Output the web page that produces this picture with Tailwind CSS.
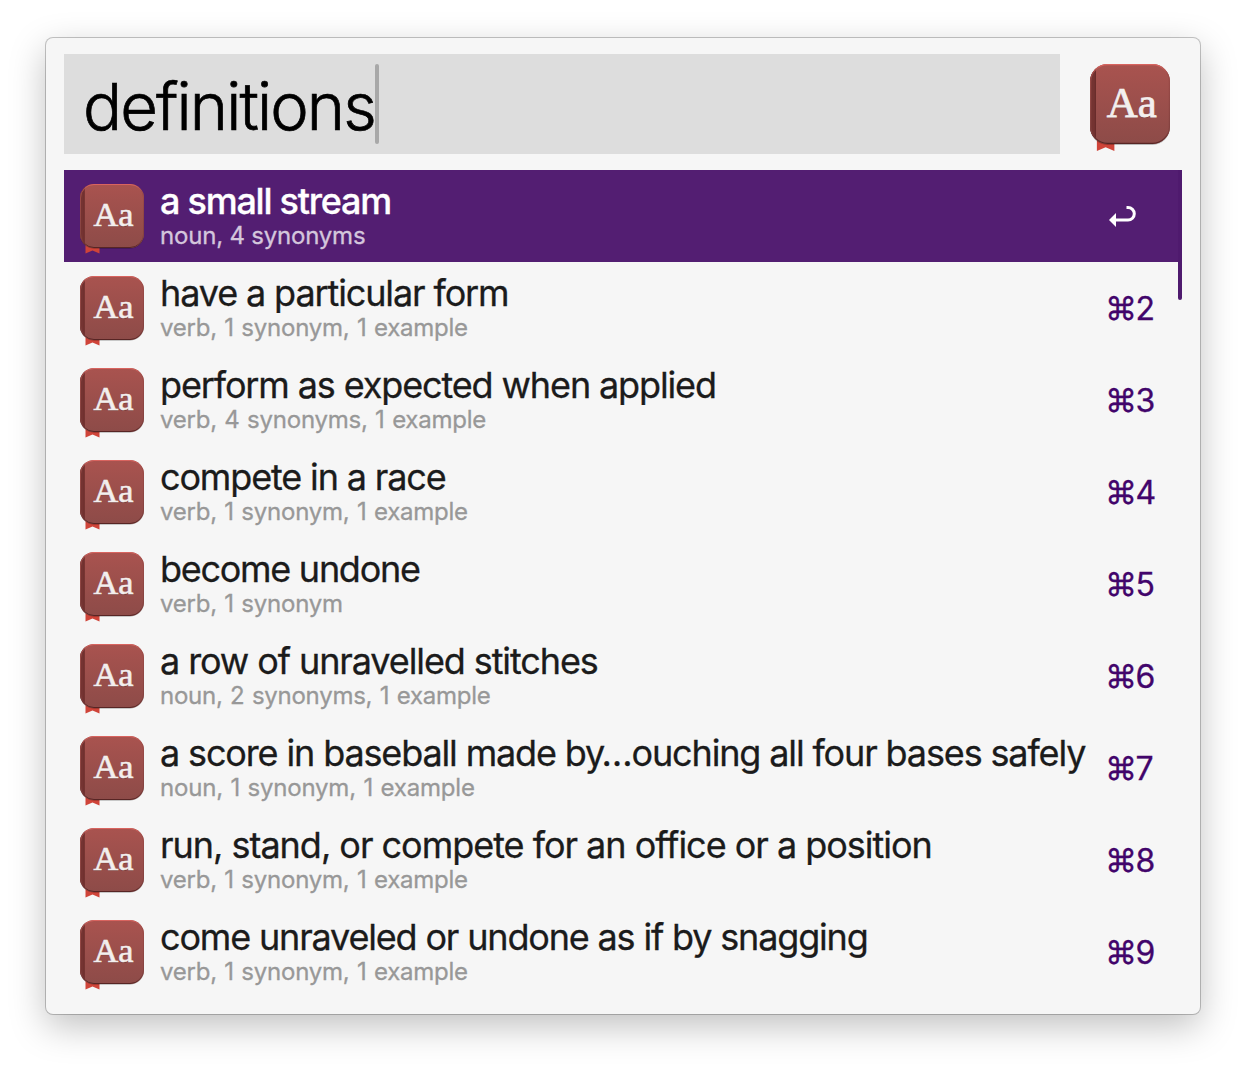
<!DOCTYPE html>
<html lang="en">
<head>
<meta charset="utf-8">
<title>definitions</title>
<script src="https://cdn.jsdelivr.net/npm/@tailwindcss/browser@4"></script>
</head>
<body class="bg-white w-[1246px] h-[1068px] overflow-hidden pt-[38px] pl-[46px] font-['Inter',sans-serif]">
<svg class="absolute w-0 h-0">
  <defs>
    <linearGradient id="cover" x1="0" y1="0" x2="0" y2="1"><stop offset="0" stop-color="#a9534f"/><stop offset="1" stop-color="#8d4b48"/></linearGradient>
    <linearGradient id="edge" x1="0" y1="0" x2="0" y2="1"><stop offset="0" stop-color="#d9645f"/><stop offset=".12" stop-color="#9c4b48"/><stop offset=".85" stop-color="#824240"/><stop offset="1" stop-color="#572524"/></linearGradient>
    <clipPath id="book"><rect width="64" height="64" rx="14"/></clipPath>
  </defs>
  <symbol id="dict" viewBox="0 0 64 70">
    <path d="M5.500 60H19.500V69.500L12.500 66.500L5.500 69.500Z" fill="#cf4439"/>
    <rect y=".7" width="64" height="64" rx="14" fill="#000" fill-opacity=".25"/>
    <g clip-path="url(#book)">
      <rect width="64" height="64" fill="url(#cover)"/>
      <rect width="4.200" height="64" fill="#743331"/>
      <path d="M4.300 0V64" stroke="#642a28" stroke-width=".8"/>
    </g>
    <rect x=".5" y=".5" width="63" height="63" rx="13.500" fill="none" stroke="url(#edge)"/>
    <text x="13.400" y="43" font-family="Liberation Serif, serif" font-size="33" textLength="40" lengthAdjust="spacingAndGlyphs" fill="#5d2a28" fill-opacity=".6">Aa</text>
    <text x="13.400" y="42.300" font-family="Liberation Serif, serif" font-size="33" textLength="40" lengthAdjust="spacingAndGlyphs" fill="#f3efee" stroke="#f3efee" stroke-width=".6">Aa</text>
  </symbol>
</svg>
<main class="relative w-[1154px] h-[976px] rounded-[7px] bg-[#f6f6f6] px-[18px] pt-4 shadow-[0_0_0_1px_rgba(0,0,0,0.22),0_12px_36px_rgba(0,0,0,0.25)]">
  <header class="flex">
    <div class="flex w-[996px] h-[100px] bg-[#dddddd] pl-[19px]">
      <span class="mt-[13px] text-[65px] leading-[80px] font-light tracking-[-1.900px] [-webkit-text-stroke:0.700px_black] text-black w-[292px] whitespace-nowrap">definitions</span>
      <span class="mt-[10px] w-1 h-20 rounded-full bg-[#a8a8a8]"></span>
    </div>
    <svg class="ml-[30px] mt-[10px] w-20 h-[87.500px]"><use href="#dict"/></svg>
  </header>
  <ul class="mt-4 [-webkit-text-stroke:0.300px_currentColor]">
    <li class="flex h-[92px] bg-[#531e72] pl-4">
      <svg class="mt-[14px] w-16 h-[70px] shrink-0"><use href="#dict"/></svg>
      <div class="ml-4 w-[946px] pt-[11px] whitespace-nowrap"><p class="text-[36px] leading-[40px] font-medium tracking-[-1.250px] text-white">a small stream</p><p class="mt-px text-[24px] leading-[28px] tracking-[-0.200px] text-[#d4c6dc]">noun, 4 synonyms</p></div>
      <svg class="mt-[34px] ml-[2px] w-[28px] h-[26px]" viewBox="0 0 28 26"><path d="M18.500 3.500H20a5.800 5.800 0 0 1 0 12.600H7" fill="none" stroke="#fff" stroke-width="3"/><path d="M1 16L8 9V23Z" fill="#fff"/></svg>
    </li>
    <li class="flex h-[92px] pl-4">
      <svg class="mt-[14px] w-16 h-[70px] shrink-0"><use href="#dict"/></svg>
      <div class="ml-4 w-[946px] pt-[11px] whitespace-nowrap"><p class="text-[36px] leading-[40px] tracking-[-1.120px] text-[#1b1b1b]">have a particular form</p><p class="mt-px text-[24px] leading-[28px] tracking-[-0.240px] [word-spacing:1px] text-[#989898]">verb, 1 synonym, 1 example</p></div>
      <span class="-ml-px mt-[27px] text-[32px] leading-[40px] tracking-[-1.500px] text-[#42056b] whitespace-nowrap">⌘2</span>
    </li>
    <li class="flex h-[92px] pl-4">
      <svg class="mt-[14px] w-16 h-[70px] shrink-0"><use href="#dict"/></svg>
      <div class="ml-4 w-[946px] pt-[11px] whitespace-nowrap"><p class="text-[36px] leading-[40px] tracking-[-1.130px] text-[#1b1b1b]">perform as expected when applied</p><p class="mt-px text-[24px] leading-[28px] tracking-[-0.240px] [word-spacing:1px] text-[#989898]">verb, 4 synonyms, 1 example</p></div>
      <span class="-ml-px mt-[27px] text-[32px] leading-[40px] tracking-[-1.500px] text-[#42056b] whitespace-nowrap">⌘3</span>
    </li>
    <li class="flex h-[92px] pl-4">
      <svg class="mt-[14px] w-16 h-[70px] shrink-0"><use href="#dict"/></svg>
      <div class="ml-4 w-[946px] pt-[11px] whitespace-nowrap"><p class="text-[36px] leading-[40px] tracking-[-1.150px] text-[#1b1b1b]">compete in a race</p><p class="mt-px text-[24px] leading-[28px] tracking-[-0.240px] [word-spacing:1px] text-[#989898]">verb, 1 synonym, 1 example</p></div>
      <span class="-ml-px mt-[27px] text-[32px] leading-[40px] tracking-[-1.500px] text-[#42056b] whitespace-nowrap">⌘4</span>
    </li>
    <li class="flex h-[92px] pl-4">
      <svg class="mt-[14px] w-16 h-[70px] shrink-0"><use href="#dict"/></svg>
      <div class="ml-4 w-[946px] pt-[11px] whitespace-nowrap"><p class="text-[36px] leading-[40px] tracking-[-1.280px] text-[#1b1b1b]">become undone</p><p class="mt-px text-[24px] leading-[28px] tracking-[-0.240px] [word-spacing:1px] text-[#989898]">verb, 1 synonym</p></div>
      <span class="-ml-px mt-[27px] text-[32px] leading-[40px] tracking-[-1.500px] text-[#42056b] whitespace-nowrap">⌘5</span>
    </li>
    <li class="flex h-[92px] pl-4">
      <svg class="mt-[14px] w-16 h-[70px] shrink-0"><use href="#dict"/></svg>
      <div class="ml-4 w-[946px] pt-[11px] whitespace-nowrap"><p class="text-[36px] leading-[40px] tracking-[-1.100px] text-[#1b1b1b]">a row of unravelled stitches</p><p class="mt-px text-[24px] leading-[28px] tracking-[-0.260px] [word-spacing:1px] text-[#989898]">noun, 2 synonyms, 1 example</p></div>
      <span class="-ml-px mt-[27px] text-[32px] leading-[40px] tracking-[-1.500px] text-[#42056b] whitespace-nowrap">⌘6</span>
    </li>
    <li class="flex h-[92px] pl-4">
      <svg class="mt-[14px] w-16 h-[70px] shrink-0"><use href="#dict"/></svg>
      <div class="ml-4 w-[946px] pt-[11px] whitespace-nowrap"><p class="text-[36px] leading-[40px] tracking-[-1.140px] text-[#1b1b1b]">a score in baseball made by…ouching all four bases safely</p><p class="mt-px text-[24px] leading-[28px] tracking-[-0.200px] [word-spacing:1px] text-[#989898]">noun, 1 synonym, 1 example</p></div>
      <span class="-ml-px mt-[27px] text-[32px] leading-[40px] tracking-[-1.500px] text-[#42056b] whitespace-nowrap">⌘7</span>
    </li>
    <li class="flex h-[92px] pl-4">
      <svg class="mt-[14px] w-16 h-[70px] shrink-0"><use href="#dict"/></svg>
      <div class="ml-4 w-[946px] pt-[11px] whitespace-nowrap"><p class="text-[36px] leading-[40px] tracking-[-1.020px] text-[#1b1b1b]">run, stand, or compete for an office or a position</p><p class="mt-px text-[24px] leading-[28px] tracking-[-0.240px] [word-spacing:1px] text-[#989898]">verb, 1 synonym, 1 example</p></div>
      <span class="-ml-px mt-[27px] text-[32px] leading-[40px] tracking-[-1.500px] text-[#42056b] whitespace-nowrap">⌘8</span>
    </li>
    <li class="flex h-[92px] pl-4">
      <svg class="mt-[14px] w-16 h-[70px] shrink-0"><use href="#dict"/></svg>
      <div class="ml-4 w-[946px] pt-[11px] whitespace-nowrap"><p class="text-[36px] leading-[40px] tracking-[-1.170px] text-[#1b1b1b]">come unraveled or undone as if by snagging</p><p class="mt-px text-[24px] leading-[28px] tracking-[-0.240px] [word-spacing:1px] text-[#989898]">verb, 1 synonym, 1 example</p></div>
      <span class="-ml-px mt-[27px] text-[32px] leading-[40px] tracking-[-1.500px] text-[#42056b] whitespace-nowrap">⌘9</span>
    </li>
  </ul>
  <div class="absolute right-[18px] top-[132px] w-1 h-[130px] rounded-b-full bg-[#4f1a6e]"></div>
</main>
</body>
</html>
